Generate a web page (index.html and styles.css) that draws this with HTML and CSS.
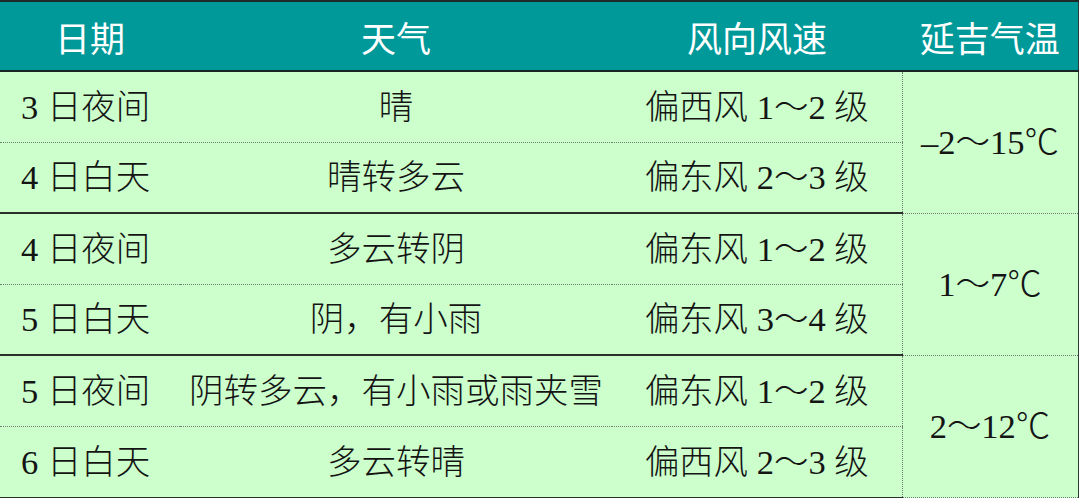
FILE: index.html
```html
<!DOCTYPE html>
<html lang="zh-CN">
<head>
<meta charset="utf-8">
<link rel="stylesheet" href="styles.css">
</head>
<body>
<table class="weather">
  <colgroup>
    <col class="c-date">
    <col class="c-sky">
    <col class="c-wind">
    <col class="c-temp">
  </colgroup>
  <thead>
    <tr>
      <th>日期</th>
      <th>天气</th>
      <th>风向风速</th>
      <th>延吉气温</th>
    </tr>
  </thead>
  <tbody>
    <tr class="first">
      <td class="date">3 日夜间</td>
      <td>晴</td>
      <td>偏西风 1～2 级</td>
      <td class="temp" rowspan="2">–2～15℃</td>
    </tr>
    <tr class="second">
      <td class="date">4 日白天</td>
      <td>晴转多云</td>
      <td>偏东风 2～3 级</td>
    </tr>
    <tr class="first">
      <td class="date">4 日夜间</td>
      <td>多云转阴</td>
      <td>偏东风 1～2 级</td>
      <td class="temp" rowspan="2">1～7℃</td>
    </tr>
    <tr class="second">
      <td class="date">5 日白天</td>
      <td>阴，有小雨</td>
      <td>偏东风 3～4 级</td>
    </tr>
    <tr class="first">
      <td class="date">5 日夜间</td>
      <td>阴转多云，有小雨或雨夹雪</td>
      <td>偏东风 1～2 级</td>
      <td class="temp" rowspan="2">2～12℃</td>
    </tr>
    <tr class="second">
      <td class="date">6 日白天</td>
      <td>多云转晴</td>
      <td>偏西风 2～3 级</td>
    </tr>
  </tbody>
</table>
</body>
</html>
```
FILE: styles.css
```css
html, body {
  margin: 0;
  padding: 0;
  background: #ffffff;
}

.weather {
  width: 1078px;
  border-collapse: collapse;
  table-layout: fixed;
  font-family: "Liberation Serif", "Noto Sans CJK SC", serif;
  font-size: 34.5px;
  color: #141414;
  background: #ccffcc;
  border-top: 2px solid #1e2a28;
  border-right: 1px solid #2a3a36;
}

.c-date { width: 180px; }
.c-sky { width: 432px; }
.c-wind { width: 290px; }
.c-temp { width: 176px; }

.weather th {
  background: #009999;
  color: #ffffff;
  font-family: "Noto Sans CJK SC", sans-serif;
  font-weight: 400;
  font-size: 35px;
  height: 68px;
  padding: 0;
  text-align: center;
  border-bottom: 2px solid #1a2422;
  line-height: 1;
}

.weather td {
  height: 69.6px;
  padding: 0;
  text-align: center;
  vertical-align: middle;
  font-weight: 300;
  line-height: 1;
  white-space: nowrap;
}

.weather td.date {
  text-align: left;
  padding-left: 21px;
}

.weather tr.first td {
  border-bottom: 1px dotted #6f7f70;
}

.weather tr.second td {
  border-bottom: 2px solid #2a2f2a;
}

.weather td.temp {
  border-left: 1px dotted #6f7f70;
  border-bottom: 2px solid #2a2f2a;
}
```
